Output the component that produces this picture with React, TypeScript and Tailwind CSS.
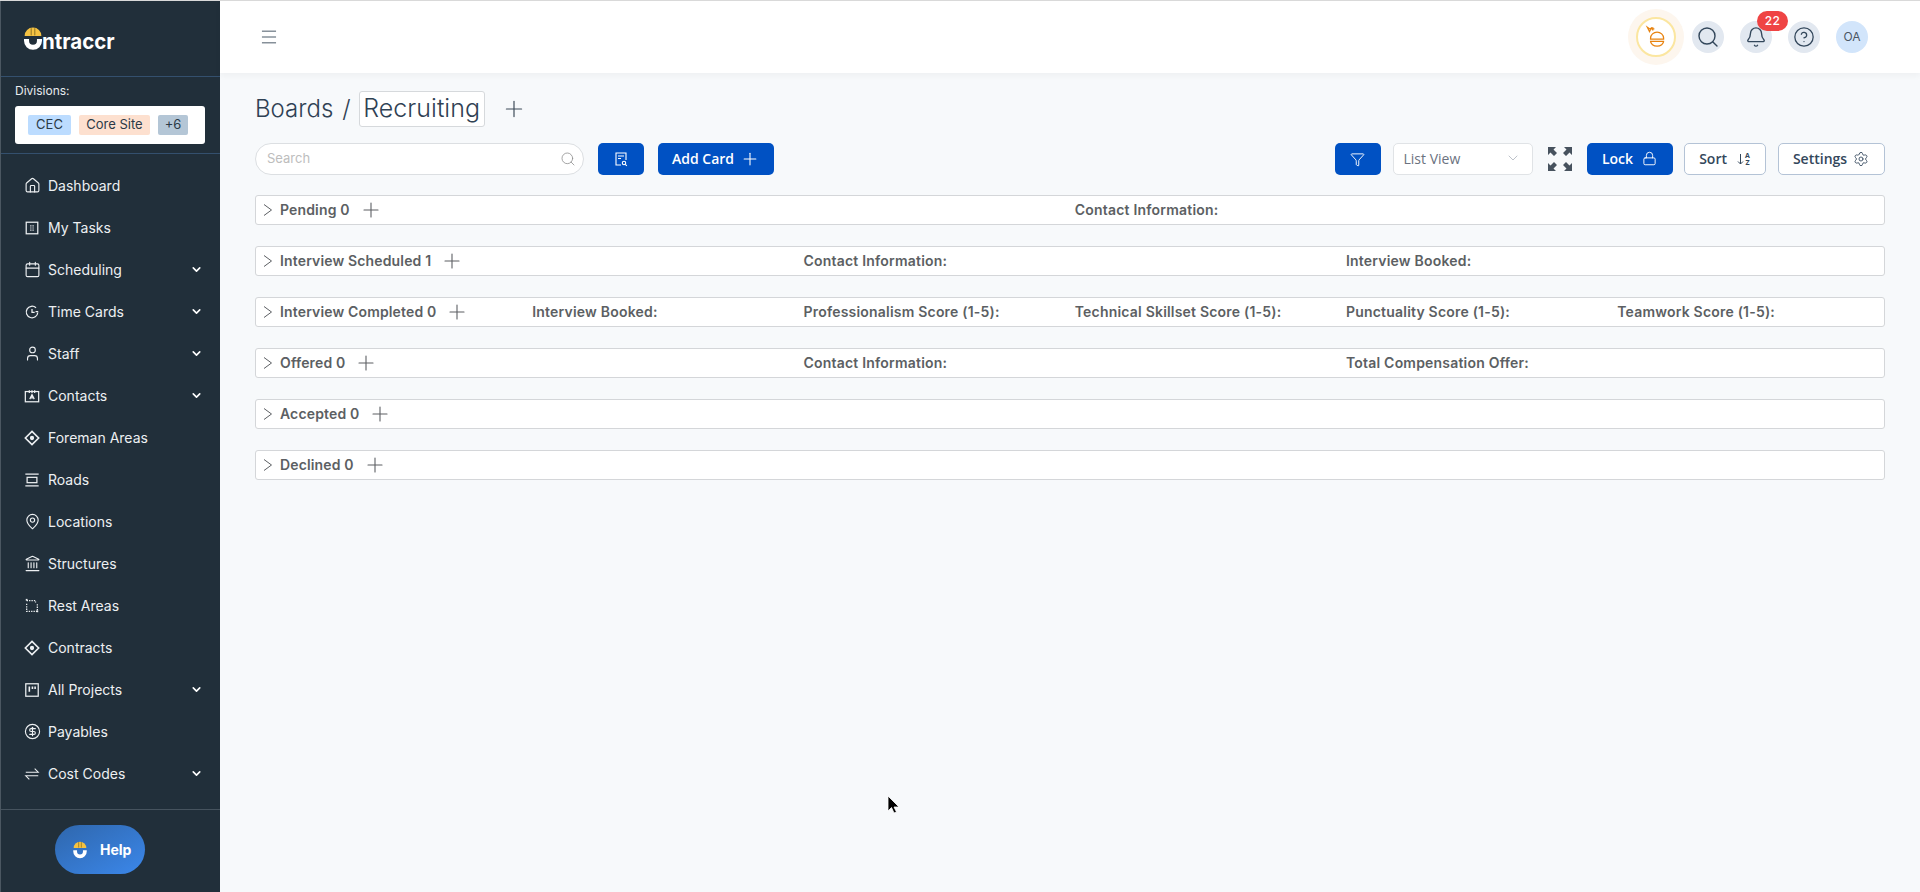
import React from "react";
import { ChevronDown, Plus, Search, Bell, CircleHelp, Lock, Settings, Funnel, Home, Calendar, User, MapPin, Landmark, CircleDollarSign, Menu } from "lucide-react";

const sw = 1.6;
const Svg = ({ children, size = 16 }: { children: React.ReactNode; size?: number }) => (
  <svg width={size} height={size} viewBox="0 0 18 18" fill="none" stroke="currentColor" strokeWidth={1.4} className="shrink-0">{children}</svg>
);

const Tasks = () => <Svg><rect x="2.500" y="2.500" width="13" height="13" /><path d="M7 6.500h4M7 9h4M7 11.500h4" strokeDasharray="1 .6" /></Svg>;
const ClockI = () => <Svg><path d="M15.500 9.500A6.500 6.500 0 1 1 13.500 4.300" /><path d="M9 5.500V9.500h3M13 8.500h3" /></Svg>;
const ContactsI = () => <Svg><rect x="1.500" y="4" width="15" height="11.500" /><path d="M6 2.500v3M9 2.500v3M12 2.500v3M6.500 12.500 9 7.500l2.500 5M7.500 11h3" /></Svg>;
const Diamond = () => <Svg><path d="M9 1.500 16.500 9 9 16.500 1.500 9Z" strokeWidth={1.800} /><circle cx="9" cy="9" r="1.700" fill="currentColor" /></Svg>;
const RoadsI = () => <Svg><path d="M1.500 2.500h15M1.500 15.500h15" /><rect x="3.500" y="6" width="11" height="6" /></Svg>;
const RestI = () => <Svg><path d="M3 3h10v2M15 7v8H3V6" strokeDasharray="1.500 1.200" /><rect x="2" y="1" width="2" height="2" fill="currentColor" stroke="none" /><rect x="14" y="14" width="2" height="2" fill="currentColor" stroke="none" /></Svg>;
const ProjectsI = () => <Svg><rect x="2" y="2" width="14" height="14" /><path d="M6 5v6M9.500 5v3M12.500 5v3" strokeWidth={1.800} /></Svg>;
const CostI = () => <Svg><path d="M2 7h14L12 3M16 11H2l4 4" strokeWidth={1.200} /></Svg>;

const L = (I: any) => () => <I size={17} strokeWidth={sw} className="shrink-0 -mx-[0.5px]" />;

const nav: [string, React.ComponentType, boolean][] = [
  ["Dashboard", L(Home), false],
  ["My Tasks", Tasks, false],
  ["Scheduling", L(Calendar), true],
  ["Time Cards", ClockI, true],
  ["Staff", L(User), true],
  ["Contacts", ContactsI, true],
  ["Foreman Areas", Diamond, false],
  ["Roads", RoadsI, false],
  ["Locations", L(MapPin), false],
  ["Structures", L(Landmark), false],
  ["Rest Areas", RestI, false],
  ["Contracts", Diamond, false],
  ["All Projects", ProjectsI, true],
  ["Payables", L(CircleDollarSign), false],
  ["Cost Codes", CostI, true],
];

const HatU = ({ size = 20 }: { size?: number }) => (
  <svg width={size} height={size * 1.15} viewBox="0 0 20 23" className="shrink-0">
    <path d="M3 10a7 7 0 0 1 14 0Z" fill="#f5c242" />
    <path d="M8.500 3.500v6M11.500 3.500v6" stroke="#7b6420" strokeWidth=".7" />
    <path d="M2.500 12.500v1.500a7.500 7.500 0 0 0 15 0v-1.500h-4.200v1.500a3.300 3.300 0 0 1-6.600 0v-1.500Z" fill="#fff" />
  </svg>
);

const Chevron = () => (
  <svg width="10" height="12" viewBox="0 0 10 12" fill="none" stroke="currentColor" strokeWidth="1" className="shrink-0 mr-[7px]">
    <path d="M1 .500 8.500 6 1 11.500" />
  </svg>
);

const columns: [string, string[]][] = [
  ["Pending 0", ["Contact Information:"]],
  ["Interview Scheduled 1", ["Contact Information:", "Interview Booked:"]],
  ["Interview Completed 0", ["Interview Booked:", "Professionalism Score (1-5):", "Technical Skillset Score (1-5):", "Punctuality Score (1-5):", "Teamwork Score (1-5):"]],
  ["Offered 0", ["Contact Information:", "Total Compensation Offer:"]],
  ["Accepted 0", []],
  ["Declined 0", []],
];

const gridFor: Record<number, string> = { 0: "grid-cols-1", 1: "grid-cols-2", 2: "grid-cols-3", 5: "grid-cols-6" };

const CircleBtn = ({ children }: { children: React.ReactNode }) => (
  <div className="w-8 h-8 rounded-full bg-[#e2e8f0] flex items-center justify-center text-[#33475b]">{children}</div>
);

export default function App() {
  return (
    <div className="relative flex h-[892px] w-full overflow-hidden bg-[#f7f9fb] border-t border-[#d9d9d9] font-['Inter',sans-serif]">
      <aside className="w-[220px] shrink-0 h-full bg-[#212f3a] border-l border-[#4b5761] flex flex-col text-[#eef1f3]">
        <div className="h-[75px] flex items-center pl-[20px] pb-[2px] shrink-0">
          <HatU size={24} />
          <span className="text-[20.500px] leading-none font-bold text-white mt-[9px] -ml-[3px] font-['Inter',sans-serif]">ntraccr</span>
        </div>
        <div className="h-[78px] shrink-0 border-y border-[#34506e] pl-[14px] pr-[15px] pt-[6px]">
          <div className="text-[12px] leading-4 text-[#e8ecef]">Divisions:</div>
          <div className="mt-[7px] h-[38px] rounded-[3px] bg-white flex items-center pl-[13px] gap-2 text-[13px] text-[#2b3a47]">
            <span className="h-5 w-[43px] rounded-[2px] bg-[#bcdcff] flex items-center justify-center">CEC</span>
            <span className="h-5 w-[71px] rounded-[2px] bg-[#fde0cf] flex items-center justify-center">Core Site</span>
            <span className="h-5 w-[30px] rounded-[2px] bg-[#b4c6d6] flex items-center justify-center">+6</span>
          </div>
        </div>
        <nav className="flex-1 pt-[10.500px]">
          {nav.map(([label, Icon, chev]) => (
            <div key={label} className="h-[42px] flex items-center pl-[23px] pr-[17px] gap-[8px] text-[14px] text-[#edf0f2]">
              <Icon />
              <span className="flex-1 leading-none">{label}</span>
              {chev && <ChevronDown size={13} strokeWidth={3} className="text-white" />}
            </div>
          ))}
        </nav>
        <div className="h-[83px] shrink-0 border-t border-[#46535e] flex pl-[54px] pt-[15px]">
          <div className="w-[90px] h-[49px] rounded-full bg-gradient-to-br from-[#2f67ad] to-[#3b87ea] flex items-center pl-[16px] gap-[11px] text-white text-[14px] font-bold">
            <HatU size={18} />
            Help
          </div>
        </div>
      </aside>

      <div className="flex-1 min-w-0 flex flex-col">
        <header className="h-[72px] shrink-0 bg-white shadow-[0_3px_6px_rgba(0,0,0,0.04)] flex items-center pl-[39px] pr-[52px]">
          <Menu size={20} strokeWidth={1.200} className="text-[#4b5a68]" />
          <div className="ml-auto flex items-center">
            <div className="w-14 h-14 rounded-full bg-[#fdf6ee] flex items-center justify-center mr-[8px]">
              <div className="w-10 h-10 rounded-full bg-white border-2 border-[#fbe6a0] flex items-center justify-center">
                <svg width="26" height="26" viewBox="0 0 24 24" fill="none" stroke="#e8830f" strokeWidth="1.200">
                  <path d="M7 13a6 5.500 0 0 1 12 0v1H7ZM7 16h12a6 4.500 0 0 1-12 0Z" />
                  <path d="M4 3l3 2 1-2-2 4zM9 3v3M7.500 4.500h3" />
                </svg>
              </div>
            </div>
            <CircleBtn><Search size={24} strokeWidth={1.400} /></CircleBtn>
            <div className="relative ml-4">
              <CircleBtn><Bell size={22} strokeWidth={1.500} /></CircleBtn>
              <span className="absolute -top-[10px] left-[17px] w-[31px] h-5 rounded-full bg-[#ef4444] text-white text-[12px] font-medium flex items-center justify-center tracking-wide">22</span>
            </div>
            <div className="ml-4"><CircleBtn><CircleHelp size={22} strokeWidth={1.400} /></CircleBtn></div>
            <div className="ml-4 w-8 h-8 rounded-full bg-[#d2e5fb] text-[#4b5563] text-[12px] flex items-center justify-center">OA</div>
          </div>
        </header>

        <main className="flex-1 pl-[35px] pr-[35.500px] pt-[18px]">
          <div className="flex items-center h-[36px] text-[#2f4154] text-[24px] font-light">
            <span>Boards</span>
            <span className="ml-[9px]">/</span>
            <span className="ml-[8px] h-[36px] w-[126px] flex items-center justify-center rounded-[3px] border border-[#d6d9dc] bg-white text-[25px]">Recruiting</span>
            <Plus size={26} strokeWidth={1.100} className="ml-[16px] text-[#3d4b59]" />
          </div>

          <div className="flex items-center h-8 mt-[16px] font-['Open_Sans',sans-serif]">
            <div className="w-[329px] h-8 rounded-full border border-[#dcdfe2] bg-white flex items-center pl-[11px] pr-[7px] text-[13px] text-[#bdbdbd] font-['Inter',sans-serif]">
              <span className="flex-1">Search</span>
              <Search size={16} strokeWidth={1.200} className="text-[#8e8e8e]" />
            </div>
            <button className="ml-[14px] w-[46px] h-8 rounded-[5px] bg-[#0051c3] text-white flex items-center justify-center">
              <svg width="16" height="16" viewBox="0 0 16 16" fill="none" stroke="currentColor" strokeWidth="1.100">
                <path d="M8 14H3V2h10v7M5 5h6M5 7.500h3" /><circle cx="11" cy="12" r="1.700" /><path d="m12.300 13.300 1.500 1.500" />
              </svg>
            </button>
            <button className="ml-[14px] w-[116px] h-8 rounded-[5px] bg-[#0051c3] text-white text-[14px] font-semibold flex items-center justify-center gap-[6px] pb-[1px]">
              Add Card <Plus size={20} strokeWidth={1.300} />
            </button>

            <button className="ml-auto w-[46px] h-8 rounded-[5px] bg-[#0051c3] text-white flex items-center justify-center">
              <Funnel size={15} strokeWidth={1.500} />
            </button>
            <div className="ml-3 w-[140px] h-8 rounded-[5px] border border-[#e0e3e6] bg-white flex items-center pl-[10px] pr-[11px] text-[14px] text-[#6b7280] pb-[2px]">
              <span className="flex-1">List View</span>
              <ChevronDown size={16} strokeWidth={1} className="text-[#9ca3af]" />
            </div>
            <svg width="26" height="26" viewBox="0 0 26 26" className="ml-[14px] text-[#47525e]" fill="currentColor">
              <path d="M1 1h8L6.500 3.500 10 7l-3 3-3.500-3.500L1 9ZM25 1v8l-2.500-2.500L19 10l-3-3 3.500-3.500L17 1ZM1 25v-8l2.500 2.500L7 16l3 3-3.500 3.500L9 25ZM25 25h-8l2.500-2.500L16 19l3-3 3.500 3.500L25 17Z" />
            </svg>
            <button className="ml-[14px] w-[86px] h-8 rounded-[5px] bg-[#0051c3] text-white text-[14px] font-semibold flex items-center justify-center gap-[9px] pb-[1px]">
              Lock <Lock size={15} strokeWidth={1.500} />
            </button>
            <button className="ml-[11px] w-[82px] h-8 rounded-[5px] border border-[#b4c3d6] bg-white text-[#33475b] text-[14px] font-semibold flex items-center justify-center gap-[10px] pb-[1px]">
              Sort
              <span className="flex items-center gap-[1px]">
                <svg width="7" height="14" viewBox="0 0 7 14" fill="none" stroke="currentColor" strokeWidth="1"><path d="M3.500 2v10M1 9.500 3.500 12 6 9.500" /></svg>
                <span className="flex flex-col text-[7px] leading-[7px] font-bold"><span>A</span><span>Z</span></span>
              </span>
            </button>
            <button className="ml-3 w-[107px] h-8 rounded-[5px] border border-[#b4c3d6] bg-white text-[#33475b] text-[14px] font-semibold flex items-center justify-center gap-[6px] pb-[1px]">
              Settings <Settings size={16} strokeWidth={1.300} />
            </button>
          </div>

          <div className="mt-[20px] flex flex-col gap-[21px]">
            {columns.map(([title, fields]) => (
              <div key={title} className={`grid ${gridFor[fields.length]} h-[30px] rounded-[3px] border border-[#d4d6d9] bg-white text-[14px] font-semibold text-[#5c5f63]`}>
                <div className="flex items-center pl-[7px] pb-[1px]">
                  <Chevron />
                  <span className="tracking-[0.15px]">{title}</span>
                  <Plus size={24} strokeWidth={1.100} className="ml-[9px] mt-[1px]" />
                </div>
                {fields.map((f) => (
                  <div key={f} className="flex items-center pl-[5px] pb-[1px] tracking-[0.2px]">{f}</div>
                ))}
              </div>
            ))}
          </div>
        </main>
      </div>

      <svg width="14" height="20" viewBox="0 0 14 20" className="absolute left-[887px] top-[794px]">
        <path d="M1 1v15l3.500-3.500L7 18l2.500-1-2.500-5h5Z" fill="#000" stroke="#fff" strokeWidth=".8" />
      </svg>
    </div>
  );
}
